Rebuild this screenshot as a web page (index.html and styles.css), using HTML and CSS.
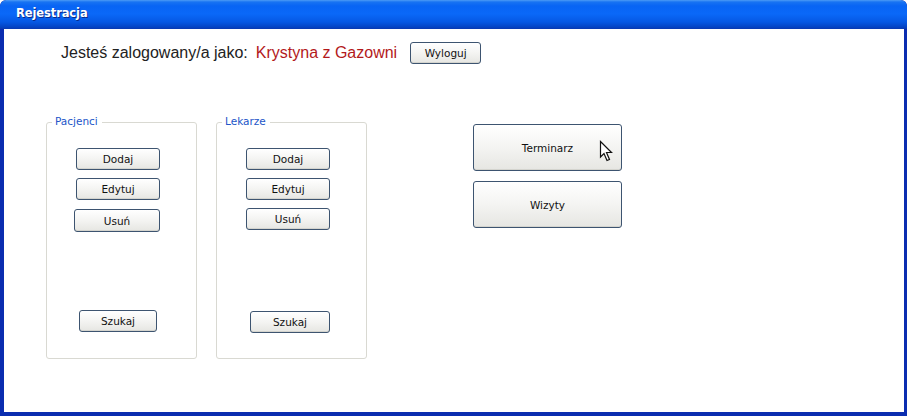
FILE: index.html
```html
<!DOCTYPE html>
<html lang="pl">
<head>
<meta charset="utf-8">
<title>Rejestracja</title>
<link rel="stylesheet" href="styles.css">
</head>
<body>
<div class="window">
  <div class="titlebar"><span class="title">Rejestracja</span></div>
  <div class="content">
    <div class="login">
      <span class="login-label">Jesteś zalogowany/a jako:</span>
      <span class="login-user">Krystyna z Gazowni</span>
      <button class="btn btn-logout">Wyloguj</button>
    </div>
    <div class="main">
      <div class="panel">
        <span class="legend">Pacjenci</span>
        <button class="btn btn-small">Dodaj</button>
        <button class="btn btn-small">Edytuj</button>
        <button class="btn btn-small btn-wide">Usuń</button>
        <button class="btn btn-small btn-search">Szukaj</button>
      </div>
      <div class="panel">
        <span class="legend">Lekarze</span>
        <button class="btn btn-small">Dodaj</button>
        <button class="btn btn-small">Edytuj</button>
        <button class="btn btn-small">Usuń</button>
        <button class="btn btn-small btn-search btn-search-2">Szukaj</button>
      </div>
      <div class="big-buttons">
        <button class="btn btn-big btn-cursor">Terminarz
          <svg class="cursor" width="14" height="22" viewBox="0 0 14 22"><path d="M1.5 1.5 L1.5 17 L5 13.5 L8 20.5 L10.5 19.5 L7.5 12.5 L12.5 12.5 Z" fill="#fff" stroke="#111" stroke-width="1.2" stroke-linejoin="miter"/></svg>
        </button>
        <button class="btn btn-big">Wizyty</button>
      </div>
    </div>
  </div>
</div>
</body>
</html>
```
FILE: styles.css
```css
* { box-sizing: border-box; }
html, body { margin: 0; padding: 0; background: #fff; }
body { width: 907px; height: 416px; overflow: hidden; }

.window {
  width: 907px;
  height: 416px;
  display: flex;
  flex-direction: column;
  background: #0a2db0;
  border-radius: 6px 6px 0 0;
  overflow: hidden;
}

.titlebar {
  height: 29px;
  flex: none;
  display: flex;
  align-items: center;
  padding-left: 16px;
  background: linear-gradient(to bottom, #4d9bf5 0px, #1873f2 2px, #0864f4 6px, #0a68f8 14px, #0658e4 22px, #0444c4 27px, #0a38b0 29px);
  border-radius: 6px 6px 0 0;
}

.title {
  color: #fff;
  font-family: "DejaVu Sans", Verdana, sans-serif;
  font-weight: bold;
  font-size: 11.5px;
  letter-spacing: -0.1px;
  text-shadow: 1px 1px 0 #0a2a8a;
  margin-top: -3px;
}

.content {
  flex: 1;
  background: #fff;
  margin: 0 3px 4px 4px;
  position: relative;
}

.login {
  display: flex;
  align-items: center;
  margin-top: 12px;
  padding-left: 57px;
  height: 23px;
}

.login-label {
  font-family: "Liberation Sans", Arial, sans-serif;
  font-size: 16px;
  color: #222;
}

.login-user {
  font-family: "Liberation Sans", Arial, sans-serif;
  font-size: 16px;
  color: #b3191b;
  margin-left: 8px;
}

.btn {
  font-family: "DejaVu Sans", Tahoma, sans-serif;
  font-size: 10.5px;
  color: #111;
  background: linear-gradient(to bottom, #ffffff 0%, #f4f4f2 50%, #e6e6e2 100%);
  border: 1px solid #3d5470;
  border-radius: 3px;
  padding: 0;
  margin: 0;
  box-shadow: inset 0 -1px 0 #d4d4ce;
}

.btn-logout {
  width: 71px;
  height: 22px;
  margin-left: 13px;
}

.main {
  display: flex;
  align-items: flex-start;
  margin-top: 58px;
  padding-left: 42px;
}

.panel {
  position: relative;
  width: 151px;
  height: 237px;
  border: 1px solid #d9d9d2;
  border-radius: 3px;
  display: flex;
  flex-direction: column;
  align-items: flex-start;
  padding-top: 25px;
  padding-left: 29px;
  margin-right: 19px;
}

.legend {
  position: absolute;
  top: -8px;
  left: 5px;
  padding: 0 4px 0 3px;
  background: #fff;
  font-family: "DejaVu Sans", Tahoma, sans-serif;
  font-size: 10.5px;
  color: #2255c8;
}

.btn-small {
  width: 84px;
  height: 22px;
  margin-bottom: 8px;
}

.btn-wide {
  width: 86px;
  height: 23px;
  margin-left: -2px;
  margin-top: 1px;
}

.btn-search {
  width: 78px;
  margin-top: 70px;
  margin-left: 3px;
}

.btn-search-2 {
  width: 80px;
  margin-left: 4px;
  margin-top: 73px;
}

.big-buttons {
  display: flex;
  flex-direction: column;
  gap: 10px;
  margin-left: 87px;
  margin-top: 2px;
}

.btn-big {
  width: 149px;
  height: 47px;
  font-size: 10.5px;
}

.btn-cursor { position: relative; }

.cursor {
  position: absolute;
  left: 125px;
  top: 15px;
}
```
